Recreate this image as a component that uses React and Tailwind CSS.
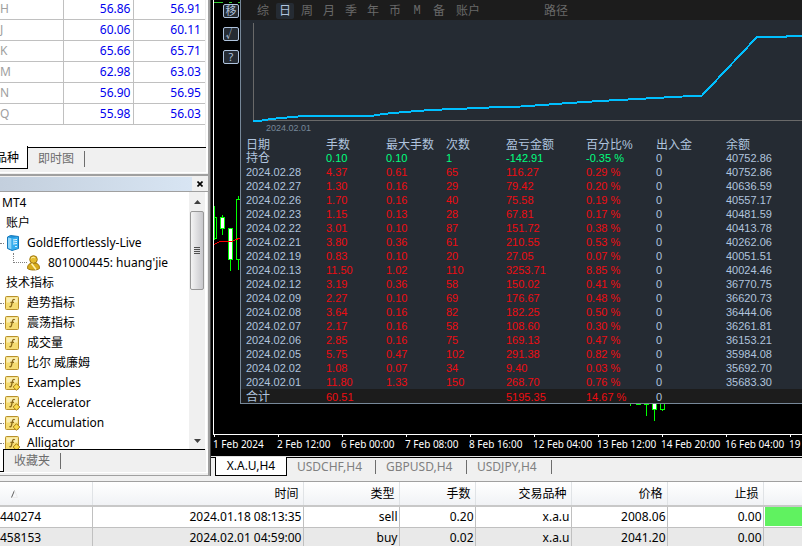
import React from "react";

const quotes = [
  ["H", "56.86", "56.91"],
  ["J", "60.06", "60.11"],
  ["K", "65.66", "65.71"],
  ["M", "62.98", "63.03"],
  ["N", "56.90", "56.95"],
  ["Q", "55.98", "56.03"],
];

const indicators = [
  ["趋势指标", false],
  ["震荡指标", false],
  ["成交量", false],
  ["比尔 威廉姆", false],
  ["Examples", true],
  ["Accelerator", true],
  ["Accumulation", true],
  ["Alligator", true],
];

const days = [
  ["2024.02.28", "4.37", "0.61", "65", "116.27", "0.29 %", "0", "40752.86"],
  ["2024.02.27", "1.30", "0.16", "29", "79.42", "0.20 %", "0", "40636.59"],
  ["2024.02.26", "1.70", "0.16", "40", "75.58", "0.19 %", "0", "40557.17"],
  ["2024.02.23", "1.15", "0.13", "28", "67.81", "0.17 %", "0", "40481.59"],
  ["2024.02.22", "3.01", "0.10", "87", "151.72", "0.38 %", "0", "40413.78"],
  ["2024.02.21", "3.80", "0.36", "61", "210.55", "0.53 %", "0", "40262.06"],
  ["2024.02.19", "0.83", "0.10", "20", "27.05", "0.07 %", "0", "40051.51"],
  ["2024.02.13", "11.50", "1.02", "110", "3253.71", "8.85 %", "0", "40024.46"],
  ["2024.02.12", "3.19", "0.36", "58", "150.02", "0.41 %", "0", "36770.75"],
  ["2024.02.09", "2.27", "0.10", "69", "176.67", "0.48 %", "0", "36620.73"],
  ["2024.02.08", "3.64", "0.16", "82", "182.25", "0.50 %", "0", "36444.06"],
  ["2024.02.07", "2.17", "0.16", "58", "108.60", "0.30 %", "0", "36261.81"],
  ["2024.02.06", "2.85", "0.16", "75", "169.13", "0.47 %", "0", "36153.21"],
  ["2024.02.05", "5.75", "0.47", "102", "291.38", "0.82 %", "0", "35984.08"],
  ["2024.02.02", "1.08", "0.07", "34", "9.40", "0.03 %", "0", "35692.70"],
  ["2024.02.01", "11.80", "1.33", "150", "268.70", "0.76 %", "0", "35683.30"],
];

const axis = [
  "1 Feb 2024",
  "2 Feb 12:00",
  "6 Feb 00:00",
  "7 Feb 08:00",
  "8 Feb 16:00",
  "12 Feb 04:00",
  "13 Feb 12:00",
  "14 Feb 20:00",
  "16 Feb 04:00",
  "19 Feb 12:00",
];

const orders = [
  ["440274", "2024.01.18 08:13:35", "sell", "0.20", "x.a.u", "2008.06", "0.00"],
  ["458153", "2024.02.01 04:59:00", "buy", "0.02", "x.a.u", "2041.20", "0.00"],
];

function FunctionIcon({ custom }) {
  return (
    <svg width="16" height="16" viewBox="0 0 16 16" className="shrink-0">
      <rect x="0.5" y="1.5" width="13" height="13" rx="1" fill="#f5dc72" stroke="#b8902c" />
      <rect x="1.5" y="2.5" width="11" height="5" fill="#fbeeb0" />
      <path d="M9.8 4.8C8.8 4 7.9 4.6 7.6 5.6L6.4 10.600C6.100 11.800 5.400 12 4.400 11.500M5.400 7.400H9" fill="none" stroke="#8a6a1c" strokeWidth="1.3" />
      {custom && <path d="M11.5 8.700L14.800 12L11.500 15.300L8.200 12Z" fill="#f9dc4c" stroke="#a87c14" />}
    </svg>
  );
}

function ServerIcon() {
  return (
    <svg width="12" height="16" viewBox="0 0 12 16" className="shrink-0">
      <path d="M0.5 2L3.5 0.500L11.500 1.500V13.500L5 15.500L0.500 13.500Z" fill="#2196dc" stroke="#1778ba" />
      <path d="M5 3L11 2V13.200L5 15Z" fill="#35aef0" />
      <path d="M1 2.500L4.500 3.200V14.500L1 13Z" fill="#8fd6fa" />
      <path d="M6 5L10 4.500M6 7L10 6.500M6 9L10 8.500" stroke="#e8f7ff" />
      <rect x="8" y="11" width="2" height="1" fill="#d6f0ff" />
    </svg>
  );
}

function UserIcon() {
  return (
    <svg width="13" height="16" viewBox="0 0 13 16" className="shrink-0">
      <path d="M0.5 13.5C0.5 9.5 2.5 8 6.5 8C10.5 8 12.5 9.5 12.5 13.5C10 15.5 3 15.5 0.5 13.5Z" fill="#d8ac1c" stroke="#a07810" />
      <circle cx="6.5" cy="4.5" r="3.8" fill="#e4bc30" stroke="#a07810" />
      <path d="M4.500 8.500L9 14.500" stroke="#fff3b0" strokeWidth="1.500" />
      <path d="M4 3.5C5 2 7 2 8 3" stroke="#fff0a0" fill="none" />
    </svg>
  );
}

function Dots() {
  return <span className="mr-px w-1 shrink-0 border-t border-dotted border-[#808080]" />;
}

function MarketWatch() {
  return (
    <section className="border-r-2 border-b border-white pb-[3px]">
      <div className="mr-px h-[147px] bg-white">
        <table className="w-full table-fixed border-collapse">
          <colgroup>
            <col className="w-[63px]" />
            <col className="w-[70px]" />
            <col />
          </colgroup>
          <tbody>
            {quotes.map(([name, bid, ask], i) => (
              <tr key={name} className={i === 0 ? "h-[19px]" : "h-[21px]"}>
                <td className="border-r border-b border-[#c0c0c0] p-0 leading-4 text-[#a0a0a0]">{name}</td>
                <td className="border-r border-b border-[#c0c0c0] p-0 pr-0.5 text-right leading-4 text-[#0000ee]">{bid}</td>
                <td className="border-b border-[#c0c0c0] p-0 pr-1 text-right leading-4 text-[#0000ee]">{ask}</td>
              </tr>
            ))}
          </tbody>
        </table>
      </div>
      <div className="flex h-[22px] items-stretch">
        <button className="-mt-px flex w-7 items-center justify-end overflow-hidden border-r border-b border-black bg-white pt-0.5 pr-2 whitespace-nowrap">品种</button>
        <div className="flex flex-1 items-center border-t border-black pl-2.5 text-[#6d6d6d]">
          <button>即时图</button>
          <span className="ml-2.5 h-4 w-px bg-[#6d6d6d]" />
        </div>
      </div>
    </section>
  );
}

function Navigator() {
  return (
    <section className="mt-px border-t-2 border-[#a0a0a0]">
      <header className="mt-px flex h-[15px] items-center border-b border-[#a0a0a0]">
        <span className="h-full flex-1 bg-linear-to-r from-[#c3cfdd] to-[#d8e5f3]" />
        <button aria-label="关闭" className="flex h-full w-4 items-center justify-center">
          <svg width="6" height="6" viewBox="0 0 6 6"><path d="M0.5 0.5L5.5 5.5M5.5 0.5L0.5 5.5" stroke="#000" strokeWidth="1.6" /></svg>
        </button>
      </header>
      <div className="mr-px flex h-[257px] border-r-2 border-white">
        <ul className="h-full flex-1 overflow-hidden bg-white pt-px whitespace-nowrap">
          <li className="flex h-5 items-center pl-0.5">MT4</li>
          <li className="flex h-5 items-center pl-1.5">账户</li>
          <li className="flex h-5 items-center pl-0"><Dots /><span className="flex w-[22px] pl-0.5"><ServerIcon /></span>GoldEffortlessly-Live</li>
          <li className="flex h-5 items-center pl-[13px]">
            <span className="mb-2.5 h-2.5 w-3.5 border-b border-l border-dotted border-[#808080]" />
            <span className="flex w-[21px]"><UserIcon /></span>801000445: huang'jie
          </li>
          <li className="flex h-5 items-center pl-1.5">技术指标</li>
          {indicators.map(([label, custom]) => (
            <li key={label} className="flex h-5 items-center"><Dots /><span className="flex w-[22px]"><FunctionIcon custom={custom} /></span>{label}</li>
          ))}
        </ul>
        <div className="flex w-4 flex-col items-center bg-[#f0f0f0]">
          <svg width="7" height="19" viewBox="0 0 7 19"><path d="M0 12L3.5 8L7 12Z" fill="#404040" /></svg>
          <div className="flex h-[79px] w-3.5 flex-col items-center justify-center gap-px rounded-xs border border-[#979797] bg-linear-to-r from-[#f4f4f4] to-[#c8c8cc]">
            <span className="h-px w-1.5 bg-[#505050]" />
            <span className="h-px w-1.5 bg-[#505050]" />
            <span className="h-px w-1.5 bg-[#505050]" />
            <span className="h-px w-1.5 bg-[#505050]" />
          </div>
          <svg width="7" height="19" viewBox="0 0 7 19" className="mt-auto"><path d="M0 9L3.5 13L7 9Z" fill="#404040" /></svg>
        </div>
      </div>
      <div className="flex h-[23px] border-r-2 border-white">
        <span className="w-1 border-r border-b border-black bg-white" />
        <div className="mr-px flex flex-1 items-center border-t border-black pl-2.5 text-[#6d6d6d]">
          <button>收藏夹</button>
          <span className="ml-2.5 h-4 w-px bg-[#6d6d6d]" />
        </div>
      </div>
      <div className="h-1 border-t border-b border-t-white border-b-[#a0a0a0]" />
    </section>
  );
}

function Candles() {
  return (
    <svg className="absolute top-0 left-0" width="460" height="430" viewBox="0 0 460 430" shapeRendering="crispEdges" fill="none">
      <path d="M0 2.5H9M15 2.5H18M24 2.5H27" stroke="#32cd32" />
      <path d="M0.5 206V240M0.5 217.5H2.5V238.5H0.5M8.5 215V235M16.5 228V271M24.5 196V199M22.5 199.5H26.5V259.5H22.5ZM24.5 259V270" stroke="#00ff00" />
      <rect x="6.5" y="217.5" width="4" height="11" fill="#fff" stroke="#00ff00" />
      <rect x="14.5" y="228.5" width="4" height="31" fill="#fff" stroke="#00ff00" />
      <path d="M0 244.5L6 241.5H18L27 237.5" stroke="#ff0000" />
      <path d="M416.5 400V406M422 404.5H427M430 404.5H435M432.5 404V416M440.5 404V421M446.5 400V409.5H450.5V400M448.5 409V411" stroke="#00ff00" />
      <rect x="438.5" y="400.5" width="4" height="9" fill="#fff" stroke="#00ff00" />
    </svg>
  );
}

function SideButton({ children }) {
  return (
    <button className="flex h-3.5 w-4 items-center justify-center rounded-xs border border-[#b0c4de] bg-[#252b33] text-[11px] leading-3 text-[#b0c4de]">{children}</button>
  );
}

const headers = ["日期", "手数", "最大手数", "次数", "盈亏金额", "百分比%", "出入金", "余额"];

function cellTone(i) {
  return i > 0 && i < 6 ? "p-0 text-[#ee0c12]" : "p-0";
}

function Report() {
  return (
    <div className="min-w-0 flex-1 border-b border-l border-[#778899] bg-[#252b33] font-['Liberation_Sans','Noto_Sans_CJK_SC',sans-serif] text-[#b0c4de]">
      <nav className="flex h-5 items-center overflow-hidden bg-[#1c1c1c] pt-0.5 pl-[11px] text-xs leading-4 text-[#696969]">
        <button className="w-[22px]">综</button>
        <button className="flex w-[22px] justify-center"><span className="w-[18px] rounded-xs bg-[#252b33] text-[#b0c4de]">日</span></button>
        <button className="w-[22px]">周</button>
        <button className="w-[22px]">月</button>
        <button className="w-[22px]">季</button>
        <button className="w-[22px]">年</button>
        <button className="w-[22px]">币</button>
        <button className="w-[22px] font-['Liberation_Mono',monospace]">M</button>
        <button className="w-[22px]">备</button>
        <button className="ml-1.5">账户</button>
        <button className="ml-16">路径</button>
      </nav>
      <div className="h-[117px]">
        <svg className="block h-[102px] w-full" viewBox="0 20 561 102" preserveAspectRatio="none" shapeRendering="crispEdges" fill="none">
          <path d="M12.5 23V121M12 120.5H561" stroke="#696969" />
          <path d="M12 121L18 121L30 119L63 116L130 116L142 114L164 112L189 110L226 108.500L259 107L280 106.500L301 105L328 103L359 101L396 99L432 97L461 95.500L516 37L545 37L546 36L561 36" stroke="#00bfff" strokeWidth="2" />
        </svg>
        <p className="pl-[25px] text-[9px] leading-3 text-[#778899]">2024.02.01</p>
      </div>
      <table className="w-full table-fixed border-collapse text-left text-[11px] leading-[14px] whitespace-nowrap">
        <colgroup>
          <col className="w-[85px]" />
          <col className="w-[60px]" />
          <col className="w-[60px]" />
          <col className="w-[60px]" />
          <col className="w-20" />
          <col className="w-[70px]" />
          <col className="w-[70px]" />
          <col />
        </colgroup>
        <thead>
          <tr className="h-3.5 text-xs leading-3">
            {headers.map((h, i) => <th key={h} className={i === 0 ? "p-0 pt-0.5 pl-[5px] font-normal" : "p-0 pt-0.5 font-normal"}>{h}</th>)}
          </tr>
        </thead>
        <tbody>
          <tr className="h-3.5 text-[#00ff7f]">
            <td className="p-0 pl-[5px] text-xs leading-[14px] text-[#b0c4de]">持仓</td>
            <td className="p-0">0.10</td>
            <td className="p-0">0.10</td>
            <td className="p-0">1</td>
            <td className="p-0">-142.91</td>
            <td className="p-0">-0.35 %</td>
            <td className="p-0 text-[#b0c4de]">0</td>
            <td className="p-0 text-[#b0c4de]">40752.86</td>
          </tr>
          {days.map((row) => (
            <tr key={row[0]} className="h-3.5">
              {row.map((v, i) => <td key={i} className={i === 0 ? "p-0 pl-[5px]" : cellTone(i)}>{v}</td>)}
            </tr>
          ))}
        </tbody>
        <tfoot>
          <tr className="h-3.5 bg-[#1c1c1c] leading-3 text-[#ee0c12]">
            <td className="p-0 pt-0.5 pl-[5px] text-xs leading-3 text-[#b0c4de]">合计</td>
            <td className="p-0 pt-0.5">60.51</td>
            <td className="p-0" />
            <td className="p-0" />
            <td className="p-0 pt-0.5">5195.35</td>
            <td className="p-0 pt-0.5">14.67 %</td>
            <td className="p-0 pt-0.5 text-[#b0c4de]">0</td>
            <td className="p-0" />
          </tr>
        </tfoot>
      </table>
    </div>
  );
}

function Chart() {
  return (
    <section className="min-w-0 flex-1">
      <div className="border-b border-[#e0e0e0] bg-black pl-0.5">
        <div className="relative h-[435px] border-b border-l border-white">
          <Candles />
          <div className="relative flex">
            <div className="flex w-[26px] shrink-0 flex-col gap-[9px] pt-1 pl-[9px]">
              <SideButton>移</SideButton>
              <SideButton>√</SideButton>
              <SideButton>?</SideButton>
            </div>
            <Report />
          </div>
        </div>
        <div className="flex h-[21px] overflow-hidden font-['Noto_Sans',sans-serif] text-[10px] whitespace-nowrap text-white">
          {axis.map((label) => (
            <div key={label} className="w-16 shrink-0">
              <span className="ml-px block h-0.5 w-px bg-white" />
              <span className="block leading-[14px]">{label}</span>
            </div>
          ))}
        </div>
      </div>
      <div className="flex h-[19px] text-[#808080]">
        <span className="w-1 border-t border-black" />
        <button className="flex w-[72px] items-center justify-center border-x border-b border-black bg-white text-black">X.A.U,H4</button>
        <div className="flex flex-1 items-center border-t border-black pl-2.5">
          <button className="w-[68px] text-left">USDCHF,H4</button>
          <span className="mx-2.5 h-3.5 w-px bg-[#6d6d6d]" />
          <button className="w-[70px] text-left">GBPUSD,H4</button>
          <span className="mx-2.5 h-3.5 w-px bg-[#6d6d6d]" />
          <button className="w-16 text-left">USDJPY,H4</button>
          <span className="mx-2.5 h-3.5 w-px bg-[#6d6d6d]" />
        </div>
      </div>
    </section>
  );
}

function Terminal() {
  return (
    <section className="flex-1 border-t border-[#a0a0a0] bg-white">
      <table className="w-full table-fixed border-collapse whitespace-nowrap">
        <colgroup>
          <col className="w-[92px]" />
          <col className="w-[211px]" />
          <col className="w-24" />
          <col className="w-[76px]" />
          <col className="w-24" />
          <col className="w-24" />
          <col className="w-24" />
          <col />
        </colgroup>
        <thead>
          <tr className="h-6 bg-linear-to-b from-white to-[#f0f2f5]">
            <th className="border-r border-b-2 border-r-[#e0e3e6] border-b-[#c8c8c8] p-0 pl-2.5 text-left font-normal">
              <button aria-label="排序" className="block">
                <svg width="8" height="8" viewBox="0 0 8 8"><path d="M1.5 7.5L4.5 0.5" stroke="#606060" fill="none" /><path d="M4.500 0.500L7.500 7.500H2" stroke="#ececec" fill="none" /></svg>
              </button>
            </th>
            {["时间", "类型", "手数", "交易品种", "价格", "止损"].map((h) => (
              <th key={h} className="border-r border-b-2 border-r-[#e0e3e6] border-b-[#c8c8c8] p-0 pr-1 text-right leading-4 font-normal">{h}</th>
            ))}
            <th className="border-b-2 border-[#c8c8c8] p-0" />
          </tr>
        </thead>
        <tbody>
          {orders.map((row, r) => (
            <tr key={row[0]} className={r === 0 ? "h-[21px]" : "h-[21px] bg-[#e9e9e9]"}>
              {row.map((v, i) => (
                <td key={i} className={i === 0 ? "border-r border-b border-[#c0c0c0] p-0 leading-4" : "border-r border-b border-[#c0c0c0] p-0 pr-px text-right leading-4"}>{v}</td>
              ))}
              <td className="border-b border-[#c0c0c0] p-0 pl-px">{r === 0 && <div className="h-[19px] bg-[#60f260]" />}</td>
            </tr>
          ))}
        </tbody>
      </table>
    </section>
  );
}

export default function App() {
  return (
    <main className="flex min-h-screen flex-col overflow-hidden bg-[#f0f0f0] font-['Noto_Sans','Noto_Sans_CJK_SC',sans-serif] text-xs text-black">
      <div className="flex items-start pb-[5px]">
        <aside className="w-[211px] shrink-0 border-r border-[#404040]">
          <div className="border-r-2 border-[#a0a0a0]">
            <MarketWatch />
            <Navigator />
          </div>
        </aside>
        <Chart />
      </div>
      <Terminal />
    </main>
  );
}
